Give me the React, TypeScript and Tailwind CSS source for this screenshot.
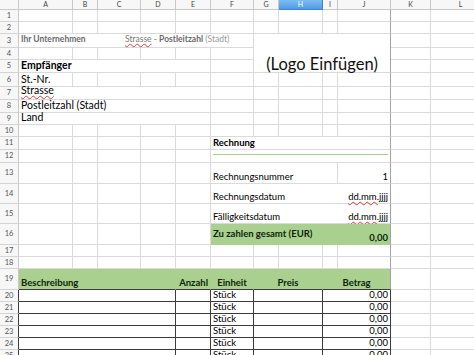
import React from 'react';

type CellProps = {
  className?: string;
  t?: string; // typography
  p?: string; // padding
  children?: React.ReactNode;
};

// grid cell with Excel-like gridlines (right + bottom only)
const C = ({
  className = '',
  t = 'text-[9.5px] leading-[11px] text-black',
  p = 'px-[2px] pb-[1px]',
  children,
}: CellProps) => (
  <div className={`min-w-0 flex items-end whitespace-nowrap border-r border-b ${p} ${t} ${className}`}>{children}</div>
);

const GRID = 'border-[#dadada]';
const DARK = 'border-[#3c3c3c]';
const JEDGE = 'border-b-[#dadada] border-r-[#a3a3a3]';
const BIG = 'text-[10.5px] leading-[12px] text-black';
const HEAD = 'text-[9.5px] leading-[11px] font-bold text-[#0f230a]';

const RowHead = ({ n, dark = false }: { n: number; dark?: boolean }) => (
  <div
    className={`flex items-center justify-center border-b border-r border-b-[#d4d4d4] bg-[#f7f7f7] text-[7.5px] text-[#555] ${
      dark ? 'border-r-[#3c3c3c]' : 'border-r-[#c8c8c8]'
    }`}
  >
    {n}
  </div>
);

const cols = ['A', 'B', 'C', 'D', 'E', 'F', 'G', 'H', 'I', 'J', 'K', 'L'];

const Blanks = ({ letters }: { letters: string[] }) => (
  <>
    {letters.map((c) => (
      <C key={c} className={c === 'J' ? JEDGE : GRID} />
    ))}
  </>
);

// an entire row of empty cells from column A to L
const EmptyRow = ({ n }: { n: number }) => (
  <>
    <RowHead n={n} />
    <Blanks letters={cols} />
  </>
);

const Squiggle = ({ children }: { children: React.ReactNode }) => (
  <span className="underline decoration-wavy decoration-[#e23b3b] decoration-1 underline-offset-[1px]">{children}</span>
);

const ItemRow = ({ n }: { n: number }) => (
  <>
    <RowHead n={n} dark />
    <C className={`col-span-4 ${DARK}`} />
    <C className={DARK} />
    <C className={DARK}>Stück</C>
    <C className={`col-span-2 ${DARK}`} />
    <C className={`col-span-2 justify-end ${DARK}`}>0,00</C>
    <Blanks letters={['K', 'L']} />
  </>
);

export default function App() {
  return (
    <div className="w-[474px] h-[355px] overflow-hidden bg-white font-['Lato',sans-serif]">
      <div className="grid grid-cols-[19px_54px_25px_43px_35px_35px_43px_25px_44px_15px_53px_40px_60px] grid-rows-[10px_12px_12px_14px_12px_13px_14px_13px_13px_12px_12px_13px_13px_21px_20px_20px_21px_12px_12px_21px_12px_12px_12px_12px_12px_12px]">
        {/* column headers */}
        <div className="border-b border-r border-[#c8c8c8] bg-[#f7f7f7]" />
        {cols.map((c) => (
          <div
            key={c}
            className={`flex items-center justify-center border-b border-r text-[7px] leading-none ${
              c === 'H'
                ? 'border-[#3f87d6] bg-gradient-to-b from-[#7fbcf2] to-[#4d9be6] text-white'
                : 'border-[#c8c8c8] bg-[#f7f7f7] text-[#444]'
            }`}
          >
            {c}
          </div>
        ))}

        <EmptyRow n={1} />
        <EmptyRow n={2} />

        {/* row 3: sender line + logo placeholder */}
        <RowHead n={3} />
        <C className={`col-span-6 ${GRID}`} t="text-[8.5px] leading-[11px] text-[#777]" p="px-[2px] pb-[2px]">
          <span className="w-[104px] font-bold text-[#6a6a6a]">Ihr Unternehmen</span>
          <span>
            <Squiggle>Strasse</Squiggle> - <span className="font-bold text-[#6a6a6a]">Postleitzahl</span>{' '}
            <span className="text-[#999]">(Stadt)</span>
          </span>
        </C>
        <C
          className={`col-span-4 row-span-3 items-center justify-center ${JEDGE}`}
          t="text-[16.5px] leading-none text-[#111]"
          p="pt-[5px]"
        >
          (Logo Einfügen)
        </C>
        <Blanks letters={['K', 'L']} />

        <RowHead n={4} />
        <Blanks letters={['A', 'B', 'C', 'D', 'E', 'F', 'K', 'L']} />

        {/* recipient */}
        <RowHead n={5} />
        <C className={`col-span-5 font-bold ${GRID}`} t={BIG}>
          Empfänger
        </C>
        <Blanks letters={['F', 'K', 'L']} />

        <RowHead n={6} />
        <C className={GRID} t={BIG}>
          St.-Nr.
        </C>
        <Blanks letters={['B', 'C', 'D', 'E', 'F', 'G', 'H', 'I', 'J', 'K', 'L']} />

        <RowHead n={7} />
        <C className={`col-span-5 ${GRID}`} t={BIG} p="px-[2px] pb-[3px]">
          <Squiggle>Strasse</Squiggle>
        </C>
        <Blanks letters={['F', 'G', 'H', 'I', 'J', 'K', 'L']} />

        <RowHead n={8} />
        <C className={`col-span-5 ${GRID}`} t={BIG}>
          Postleitzahl (Stadt)
        </C>
        <Blanks letters={['F', 'G', 'H', 'I', 'J', 'K', 'L']} />

        <RowHead n={9} />
        <C className={`col-span-5 ${GRID}`} t={BIG}>
          Land
        </C>
        <Blanks letters={['F', 'G', 'H', 'I', 'J', 'K', 'L']} />

        <EmptyRow n={10} />

        {/* Rechnung block */}
        <RowHead n={11} />
        <Blanks letters={['A', 'B', 'C', 'D', 'E']} />
        <C className={`col-span-5 font-bold ${JEDGE}`}>Rechnung</C>
        <Blanks letters={['K', 'L']} />

        <RowHead n={12} />
        <Blanks letters={['A', 'B', 'C', 'D', 'E']} />
        <C className={`col-span-5 items-start ${JEDGE}`} p="px-[2px] pt-[4px]">
          <div className="h-px w-full bg-[#a9cc8c]" />
        </C>
        <Blanks letters={['K', 'L']} />

        <RowHead n={13} />
        <Blanks letters={['A', 'B', 'C', 'D', 'E']} />
        <C className={`col-span-4 ${GRID}`}>Rechnungsnummer</C>
        <C className={`justify-end ${JEDGE}`}>1</C>
        <Blanks letters={['K', 'L']} />

        <RowHead n={14} />
        <Blanks letters={['A', 'B', 'C', 'D', 'E']} />
        <C className={`col-span-5 justify-between ${JEDGE}`}>
          <span>Rechnungsdatum</span>
          <Squiggle>dd.mm.jjjj</Squiggle>
        </C>
        <Blanks letters={['K', 'L']} />

        <RowHead n={15} />
        <Blanks letters={['A', 'B', 'C', 'D', 'E']} />
        <C className={`col-span-5 justify-between ${JEDGE}`}>
          <span>Fälligkeitsdatum</span>
          <Squiggle>dd.mm.jjjj</Squiggle>
        </C>
        <Blanks letters={['K', 'L']} />

        <RowHead n={16} />
        <Blanks letters={['A', 'B', 'C', 'D', 'E']} />
        <C className="col-span-5 justify-between bg-[#a9d08e] border-b-[#a9d08e] border-r-[#a3a3a3]" t={HEAD}>
          <span className="self-center">Zu zahlen gesamt (EUR)</span>
          <span>0,00</span>
        </C>
        <Blanks letters={['K', 'L']} />

        <EmptyRow n={17} />
        <EmptyRow n={18} />

        {/* item table header */}
        <RowHead n={19} />
        <C className="col-span-4 bg-[#a9d08e] border-r-[#a9d08e] border-b-[#3c3c3c]" t={HEAD}>
          Beschreibung
        </C>
        <C className="justify-end bg-[#a9d08e] border-r-[#a9d08e] border-b-[#3c3c3c]" t={HEAD}>
          Anzahl
        </C>
        <C className="justify-center bg-[#a9d08e] border-r-[#a9d08e] border-b-[#3c3c3c]" t={HEAD}>
          Einheit
        </C>
        <C className="col-span-2 justify-center bg-[#a9d08e] border-r-[#a9d08e] border-b-[#3c3c3c]" t={HEAD}>
          Preis
        </C>
        <C className="col-span-2 justify-center bg-[#a9d08e] border-r-[#a3a3a3] border-b-[#3c3c3c]" t={HEAD}>
          Betrag
        </C>
        <Blanks letters={['K', 'L']} />

        <ItemRow n={20} />
        <ItemRow n={21} />
        <ItemRow n={22} />
        <ItemRow n={23} />
        <ItemRow n={24} />
        <ItemRow n={25} />
      </div>
    </div>
  );
}
